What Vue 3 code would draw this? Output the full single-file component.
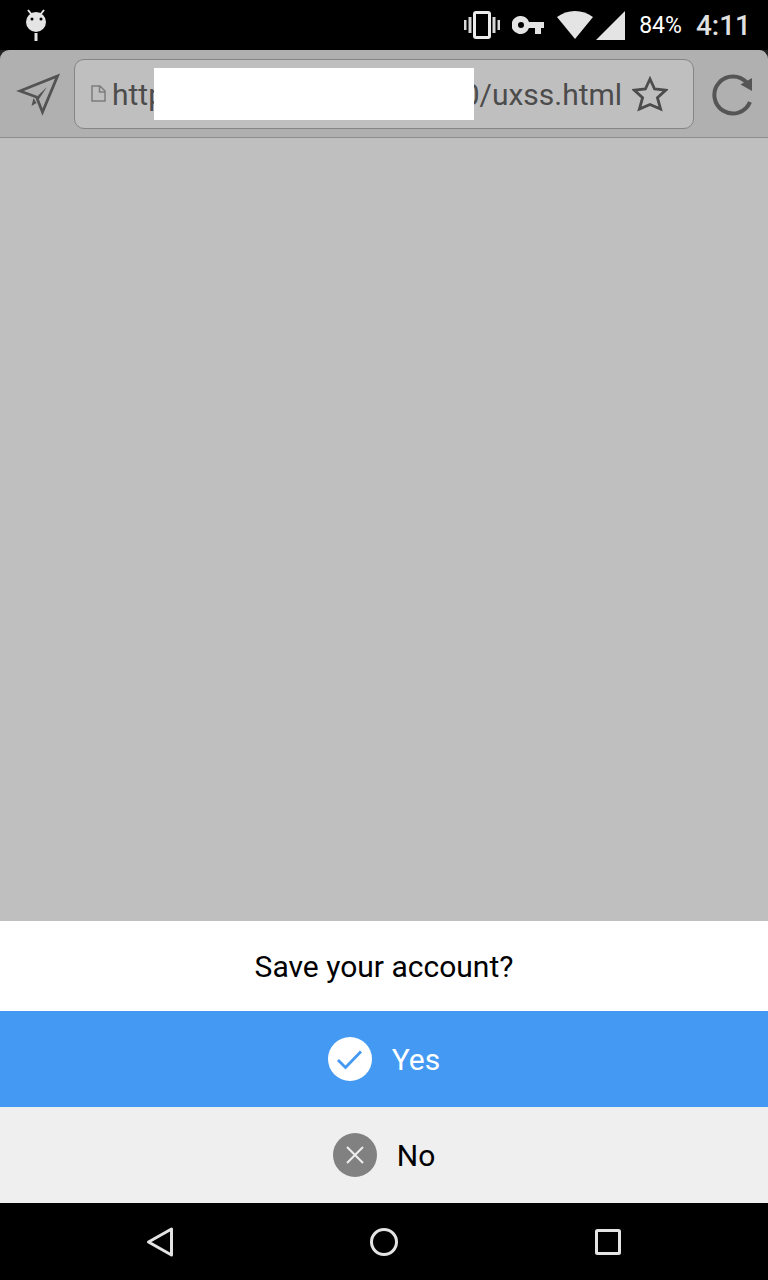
<script setup>
import { ref } from 'vue'

const address = ref('http' + '\u00a0'.repeat(40) + '0/uxss.html')
</script>

<template>
  <div class="screen">
    <header class="status">
      <svg class="droid" width="24" height="32" viewBox="0 0 24 32" aria-hidden="true">
        <path d="M4 1l4 5M20 1l-4 5" stroke="#e4e4e4" stroke-width="2" />
        <circle cx="12" cy="13" r="10" fill="#e4e4e4" />
        <circle cx="8" cy="10" r="1.5" fill="#000" />
        <circle cx="17" cy="10" r="1.5" fill="#000" />
        <path d="M10.5 24h3v8h-3z" fill="#e4e4e4" />
      </svg>
      <div class="indicators">
        <svg class="vibrate" width="36" height="28" viewBox="0 0 36 28" aria-hidden="true">
          <rect x="10.5" y="1.5" width="15" height="25" rx="1.5" fill="none" stroke="#ececec" stroke-width="3" />
          <path d="M0 9h2.5v10H0zM4.500 6h3v16h-3zM28.500 6h3v16h-3zM33.500 9H36v10h-2.500z" fill="#d8d8d8" />
        </svg>
        <svg class="key" width="32" height="18" viewBox="0 0 32 18" aria-hidden="true">
          <path fill="#e4e4e4" fill-rule="evenodd" d="M9 0a9 9 0 0 1 8 6h15v6h-3v6h-6v-6h-6A9 9 0 1 1 9 0zM9 6a3 3 0 1 0 0 6 3 3 0 0 0 0-6z" />
        </svg>
        <svg class="wifi" width="36" height="28" viewBox="0 0 36 28" aria-hidden="true">
          <path d="M0 6Q8 0 18 0t18 6L18 28z" fill="#e4e4e4" />
        </svg>
        <svg class="signal" width="29" height="29" viewBox="0 0 29 29" aria-hidden="true">
          <path d="M29 0v29H0z" fill="#e4e4e4" />
        </svg>
        <span class="battery">84%</span>
        <time class="clock">4:11</time>
      </div>
    </header>

    <div class="toolbar-wrap">
      <div class="toolbar">
        <button class="tool" type="button" aria-label="Share">
          <svg width="44" height="48" viewBox="0 0 44 48">
            <path d="M4 21L41.500 6 26.500 42 20.500 27z" fill="none" stroke="#535353" stroke-width="2.800" />
            <path d="M20 27.500L31 17 23 29z" fill="#535353" />
            <path d="M17.500 28l3 5-5 3z" fill="#535353" />
          </svg>
        </button>
        <div class="field">
          <svg class="page" width="15" height="17" viewBox="0 0 15 17" aria-hidden="true">
            <path d="M1 1h8l5 5v10H1zM8.500 1v6H14" fill="none" stroke="#7d7d7d" stroke-width="1.500" />
          </svg>
          <div class="entry">
            <input v-model="address" class="address" type="text" aria-label="Address" spellcheck="false" />
            <span class="cover"></span>
          </div>
          <button class="tool" type="button" aria-label="Bookmark">
            <svg width="36" height="36" viewBox="0 0 36 36">
              <path d="M18 3l4.600 10 11 1.200-8.200 7.500 3.200 11.300L18 28.500 7.400 33l3.200-11.300-8.200-7.500 11-1.200z" fill="none" stroke="#4c4c4c" stroke-width="2.800" />
            </svg>
          </button>
        </div>
        <button class="tool reload" type="button" aria-label="Reload">
          <svg width="40" height="44" viewBox="0 0 40 44">
            <path d="M35 11A18.500 18.500 0 1 0 38 30" fill="none" stroke="#555" stroke-width="4" />
            <path d="M40 6v13L28.500 12.500z" fill="#555" />
          </svg>
        </button>
      </div>
    </div>

    <main class="content"></main>

    <section class="sheet" role="dialog" aria-labelledby="question">
      <h1 id="question" class="question">Save your account?</h1>
      <button class="choice yes" type="button">
        <svg width="44" height="44" viewBox="0 0 44 44" aria-hidden="true">
          <circle cx="22" cy="22" r="22" fill="#fff" />
          <path d="M10 23l7.500 7.500L33 14.500" fill="none" stroke="#449af3" stroke-width="2.800" />
        </svg>
        <span>Yes</span>
      </button>
      <button class="choice no" type="button">
        <svg width="44" height="44" viewBox="0 0 44 44" aria-hidden="true">
          <circle cx="22" cy="22" r="22" fill="#818181" />
          <path d="M14 14l16 16M30 14L14 30" stroke="#efefef" stroke-width="2" />
        </svg>
        <span>No</span>
      </button>
    </section>

    <nav class="nav">
      <button class="tool" type="button" aria-label="Back">
        <svg width="32" height="32" viewBox="0 0 32 32">
          <path d="M27.500 3v26L4.500 16z" fill="none" stroke="#e4e4e4" stroke-width="3" stroke-linejoin="round" />
        </svg>
      </button>
      <button class="tool" type="button" aria-label="Home">
        <svg width="32" height="32" viewBox="0 0 32 32">
          <circle cx="16" cy="16" r="12.500" fill="none" stroke="#e4e4e4" stroke-width="3" />
        </svg>
      </button>
      <button class="tool" type="button" aria-label="Recent apps">
        <svg width="32" height="32" viewBox="0 0 32 32">
          <rect x="4.500" y="4.500" width="23" height="23" rx="1" fill="none" stroke="#e4e4e4" stroke-width="3" />
        </svg>
      </button>
    </nav>
  </div>
</template>

<style>
body {
  margin: 0;
}
</style>

<style scoped>
.screen {
  display: flex;
  flex-direction: column;
  min-height: 100vh;
  background: #bfbfbf;
  font-family: Roboto, "Liberation Sans", sans-serif;
}

svg {
  display: block;
  flex: none;
}

.status {
  display: flex;
  align-items: center;
  justify-content: space-between;
  height: 50px;
  padding: 0 17px 0 24px;
  background: #000;
}

.indicators {
  display: flex;
  align-items: center;
}

.key {
  margin-left: 12px;
}

.wifi {
  margin-left: 13px;
}

.signal {
  margin-left: 3px;
}

.battery {
  margin-left: 14px;
  color: #fff;
  font-size: 23px;
  line-height: 32px;
  padding-top: 2px;
}

.clock {
  margin-left: 14px;
  color: #e0e0e0;
  font-size: 28px;
  font-weight: 500;
  line-height: 32px;
  padding-top: 2px;
}

.toolbar-wrap {
  background: #222;
}

.toolbar {
  display: flex;
  align-items: center;
  box-sizing: border-box;
  height: 88px;
  padding: 0 16px;
  border-bottom: 1px solid #8c8c8c;
  border-radius: 9px 9px 0 0;
  background: #b0b0b0;
}

.tool {
  flex: none;
  padding: 0;
  border: 0;
  background: none;
}

.field {
  display: flex;
  flex: 1;
  align-items: center;
  box-sizing: border-box;
  min-width: 0;
  height: 70px;
  margin-left: 14px;
  padding: 0 25px 0 16px;
  border: 1px solid #858585;
  border-radius: 10px;
  background: #bfbfbf;
}

.entry {
  position: relative;
  flex: 1;
  min-width: 0;
  margin: 0 6px;
}

.address {
  display: block;
  box-sizing: border-box;
  width: 100%;
  height: 52px;
  padding: 2px 0 0;
  border: 0;
  outline: 0;
  background: none;
  color: #4c4c4c;
  font: 400 30px Roboto, "Liberation Sans", sans-serif;
}

.cover {
  position: absolute;
  top: 0;
  right: 152px;
  bottom: 0;
  left: 42px;
  background: #fff;
}

.reload {
  margin-left: 18px;
}

.content {
  flex: 1;
}

.question {
  margin: 0;
  padding-top: 2px;
  background: #fff;
  color: #000;
  font-size: 30px;
  font-weight: 400;
  line-height: 88px;
  text-align: center;
}

.choice {
  display: flex;
  align-items: center;
  justify-content: center;
  gap: 20px;
  width: 100%;
  height: 96px;
  padding: 0;
  border: 0;
  font: 400 30px Roboto, "Liberation Sans", sans-serif;
}

.yes {
  background: #449af3;
  color: #fff;
}

.no {
  background: #efefef;
  color: #000;
}

.nav {
  display: flex;
  align-items: center;
  justify-content: center;
  gap: 192px;
  height: 77px;
  background: #000;
}
</style>
